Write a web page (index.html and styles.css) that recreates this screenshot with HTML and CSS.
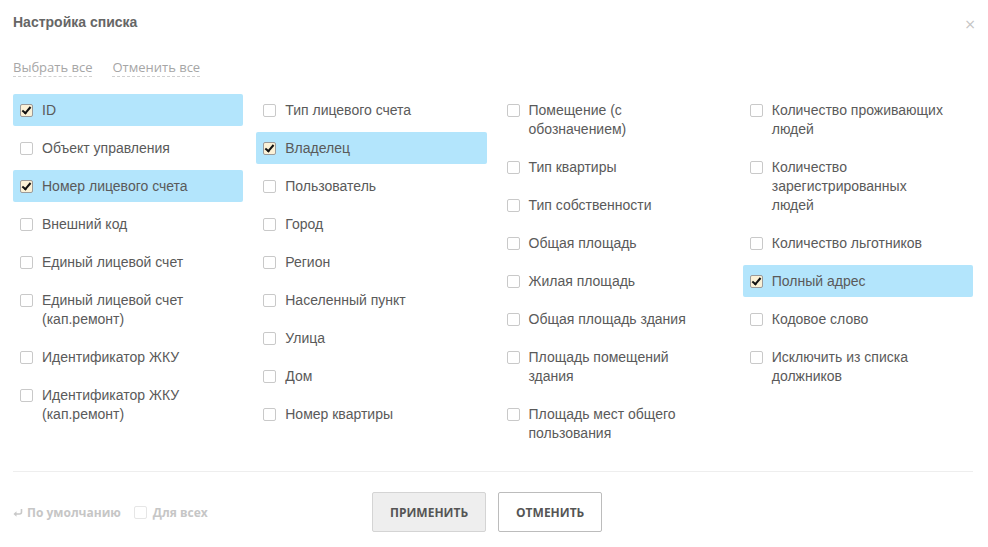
FILE: index.html
```html
<!DOCTYPE html>
<html lang="ru">
<head>
<meta charset="utf-8">
<title>Настройка списка</title>
<link rel="stylesheet" href="styles.css">
</head>
<body>
<div class="dialog">
  <div class="header">
    <div class="title">Настройка списка</div>
    <div class="close">×</div>
  </div>
  <div class="links">
    <span class="link">Выбрать все</span>
    <span class="link">Отменить все</span>
  </div>
  <div class="grid">
    <div class="col">
      <div class="item checked"><span class="cb"></span><span class="lbl">ID</span></div>
      <div class="item"><span class="cb"></span><span class="lbl">Объект управления</span></div>
      <div class="item checked"><span class="cb"></span><span class="lbl">Номер лицевого счета</span></div>
      <div class="item"><span class="cb"></span><span class="lbl">Внешний код</span></div>
      <div class="item"><span class="cb"></span><span class="lbl">Единый лицевой счет</span></div>
      <div class="item"><span class="cb"></span><span class="lbl">Единый лицевой счет (кап.ремонт)</span></div>
      <div class="item"><span class="cb"></span><span class="lbl">Идентификатор ЖКУ</span></div>
      <div class="item"><span class="cb"></span><span class="lbl">Идентификатор ЖКУ (кап.ремонт)</span></div>
    </div>
    <div class="col">
      <div class="item"><span class="cb"></span><span class="lbl">Тип лицевого счета</span></div>
      <div class="item checked"><span class="cb"></span><span class="lbl">Владелец</span></div>
      <div class="item"><span class="cb"></span><span class="lbl">Пользователь</span></div>
      <div class="item"><span class="cb"></span><span class="lbl">Город</span></div>
      <div class="item"><span class="cb"></span><span class="lbl">Регион</span></div>
      <div class="item"><span class="cb"></span><span class="lbl">Населенный пункт</span></div>
      <div class="item"><span class="cb"></span><span class="lbl">Улица</span></div>
      <div class="item"><span class="cb"></span><span class="lbl">Дом</span></div>
      <div class="item"><span class="cb"></span><span class="lbl">Номер квартиры</span></div>
    </div>
    <div class="col">
      <div class="item"><span class="cb"></span><span class="lbl">Помещение (с обозначением)</span></div>
      <div class="item"><span class="cb"></span><span class="lbl">Тип квартиры</span></div>
      <div class="item"><span class="cb"></span><span class="lbl">Тип собственности</span></div>
      <div class="item"><span class="cb"></span><span class="lbl">Общая площадь</span></div>
      <div class="item"><span class="cb"></span><span class="lbl">Жилая площадь</span></div>
      <div class="item"><span class="cb"></span><span class="lbl">Общая площадь здания</span></div>
      <div class="item"><span class="cb"></span><span class="lbl">Площадь помещений здания</span></div>
      <div class="item"><span class="cb"></span><span class="lbl">Площадь мест общего пользования</span></div>
    </div>
    <div class="col">
      <div class="item"><span class="cb"></span><span class="lbl">Количество проживающих людей</span></div>
      <div class="item"><span class="cb"></span><span class="lbl">Количество зарегистрированных людей</span></div>
      <div class="item"><span class="cb"></span><span class="lbl">Количество льготников</span></div>
      <div class="item checked"><span class="cb"></span><span class="lbl">Полный адрес</span></div>
      <div class="item"><span class="cb"></span><span class="lbl">Кодовое слово</span></div>
      <div class="item"><span class="cb"></span><span class="lbl">Исключить из списка должников</span></div>
    </div>
  </div>
  <div class="sep"></div>
  <div class="footer">
    <div class="left">
      <span class="default"><svg class="ret" width="10" height="9" viewBox="0 0 10 9"><path d="M8.5 1 V4 Q8.5 6 6.5 6 H2" fill="none" stroke="#c8c8c8" stroke-width="1.6"/><path d="M0.5 6 L3.5 3.2 L3.5 8.8 Z" fill="#c8c8c8"/></svg>По умолчанию</span>
      <span class="forall"><span class="cb faded"></span>Для всех</span>
    </div>
    <button class="btn apply">ПРИМЕНИТЬ</button>
    <button class="btn cancel">ОТМЕНИТЬ</button>
  </div>
</div>
</body>
</html>
```

FILE: styles.css
```css
html, body {
  margin: 0;
  padding: 0;
  background: #fff;
}
.dialog {
  width: 988px;
  height: 547px;
  box-sizing: border-box;
  padding: 13px 15px 0 13px;
  font-family: "Liberation Sans", Arial, sans-serif;
  color: #555;
}
.header {
  display: flex;
  justify-content: space-between;
  align-items: center;
  height: 19px;
}
.title {
  font-weight: bold;
  font-size: 14px;
  line-height: 19px;
  color: #666;
}
.close {
  font-family: "DejaVu Sans", sans-serif;
  font-size: 14px;
  line-height: 15px;
  color: #c4c4c4;
  margin-top: 4px;
  margin-right: -3px;
}
.links {
  margin-top: 26px;
  display: flex;
  gap: 20px;
  font-family: "Open Sans", sans-serif;
  font-size: 13px;
  line-height: 18px;
}
.link {
  color: #a6a6a6;
  border-bottom: 1px dashed #d0d0d0;
}
.grid {
  margin-top: 17px;
  display: grid;
  grid-template-columns: repeat(4, 1fr);
  column-gap: 13px;
  height: 377px;
}
.col {
  display: flex;
  flex-direction: column;
  gap: 6px;
}
.item {
  display: flex;
  align-items: flex-start;
  padding: 7px 0 6px 7px;
  border-radius: 2px;
  font-size: 14px;
  line-height: 19px;
  color: #5a5a5a;
}
.item.checked {
  background: #b3e5fc;
}
.lbl {
  width: 176px;
}
.cb {
  flex: none;
  width: 11px;
  height: 11px;
  border: 1px solid #c9c9c9;
  border-radius: 2px;
  background: #fff;
  margin: 3px 9px 0 0;
  box-sizing: content-box;
  position: relative;
}
.item.checked .cb {
  background: #fbf1d6;
  border-color: #9a9a9a;
}
.item.checked .cb::after {
  content: "";
  position: absolute;
  left: 3px;
  top: 0px;
  width: 3px;
  height: 7px;
  border-right: 2px solid #111;
  border-bottom: 2px solid #111;
  transform: rotate(40deg);
}
.sep {
  height: 1px;
  background: #eeeeee;
}
.footer {
  display: flex;
  align-items: center;
  margin-top: 20px;
}
.left {
  width: 359px;
  display: flex;
  align-items: center;
  font-family: "Open Sans", sans-serif;
  font-weight: bold;
  font-size: 12px;
  color: #c6c6c6;
}
.default {
  display: flex;
  align-items: center;
  gap: 4px;
}
.forall {
  display: flex;
  align-items: center;
  margin-left: 13px;
}
.cb.faded {
  border-color: #e6e6e6;
  margin: 0 6px 0 0;
}
.btn {
  height: 40px;
  box-sizing: border-box;
  padding: 0 17px;
  font-family: "Open Sans", sans-serif;
  font-weight: bold;
  font-size: 12px;
  color: #555;
  border-radius: 2px;
  cursor: pointer;
}
.apply {
  background: #eeeeee;
  border: 1px solid #d4d4d4;
}
.cancel {
  margin-left: 12px;
  background: #fff;
  border: 1px solid #bcbcbc;
}
```
